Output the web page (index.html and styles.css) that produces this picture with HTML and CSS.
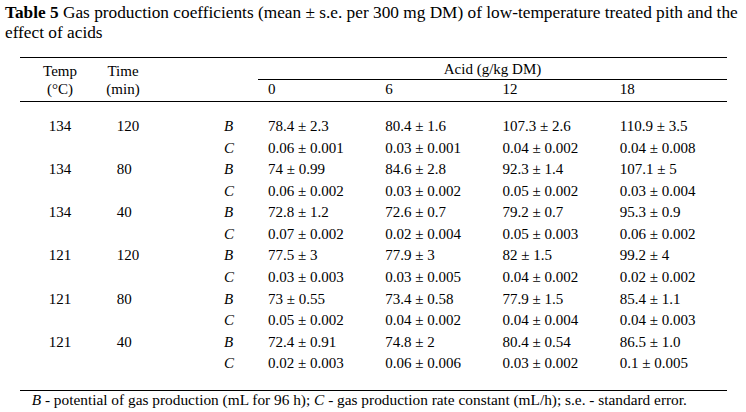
FILE: index.html
```html
<!DOCTYPE html>
<html lang="en">
<head>
<meta charset="utf-8">
<title>Table 5</title>
<link rel="stylesheet" href="styles.css">
</head>
<body>
<div class="page">
  <p class="caption"><b>Table 5</b> Gas production coefficients (mean ± s.e. per 300 mg DM) of low-temperature treated pith and the <span class="cap-end">effect of acids</span></p>
  <table class="data">
    <colgroup>
      <col class="c-temp"><col class="c-time"><col class="c-par">
      <col class="c-val"><col class="c-val"><col class="c-val"><col class="c-val">
    </colgroup>
    <thead>
      <tr class="h1">
        <th rowspan="2" class="stack">Temp<br>(°C)</th>
        <th rowspan="2" class="stack">Time<br>(min)</th>
        <th rowspan="2" class="stack"></th>
        <th colspan="4" class="acid">Acid (g/kg DM)</th>
      </tr>
      <tr class="h2">
        <th class="val">0</th><th class="val">6</th><th class="val">12</th><th class="val">18</th>
      </tr>
    </thead>
    <tbody>
      <tr class="first"><td class="temp">134</td><td class="time">120</td><td class="par">B</td><td>78.4 ± 2.3</td><td>80.4 ± 1.6</td><td>107.3 ± 2.6</td><td>110.9 ± 3.5</td></tr>
      <tr><td class="temp"></td><td class="time"></td><td class="par">C</td><td>0.06 ± 0.001</td><td>0.03 ± 0.001</td><td>0.04 ± 0.002</td><td>0.04 ± 0.008</td></tr>
      <tr><td class="temp">134</td><td class="time">80</td><td class="par">B</td><td>74 ± 0.99</td><td>84.6 ± 2.8</td><td>92.3 ± 1.4</td><td>107.1 ± 5</td></tr>
      <tr><td class="temp"></td><td class="time"></td><td class="par">C</td><td>0.06 ± 0.002</td><td>0.03 ± 0.002</td><td>0.05 ± 0.002</td><td>0.03 ± 0.004</td></tr>
      <tr><td class="temp">134</td><td class="time">40</td><td class="par">B</td><td>72.8 ± 1.2</td><td>72.6 ± 0.7</td><td>79.2 ± 0.7</td><td>95.3 ± 0.9</td></tr>
      <tr><td class="temp"></td><td class="time"></td><td class="par">C</td><td>0.07 ± 0.002</td><td>0.02 ± 0.004</td><td>0.05 ± 0.003</td><td>0.06 ± 0.002</td></tr>
      <tr><td class="temp">121</td><td class="time">120</td><td class="par">B</td><td>77.5 ± 3</td><td>77.9 ± 3</td><td>82 ± 1.5</td><td>99.2 ± 4</td></tr>
      <tr><td class="temp"></td><td class="time"></td><td class="par">C</td><td>0.03 ± 0.003</td><td>0.03 ± 0.005</td><td>0.04 ± 0.002</td><td>0.02 ± 0.002</td></tr>
      <tr><td class="temp">121</td><td class="time">80</td><td class="par">B</td><td>73 ± 0.55</td><td>73.4 ± 0.58</td><td>77.9 ± 1.5</td><td>85.4 ± 1.1</td></tr>
      <tr><td class="temp"></td><td class="time"></td><td class="par">C</td><td>0.05 ± 0.002</td><td>0.04 ± 0.002</td><td>0.04 ± 0.004</td><td>0.04 ± 0.003</td></tr>
      <tr><td class="temp">121</td><td class="time">40</td><td class="par">B</td><td>72.4 ± 0.91</td><td>74.8 ± 2</td><td>80.4 ± 0.54</td><td>86.5 ± 1.0</td></tr>
      <tr class="last"><td class="temp"></td><td class="time"></td><td class="par">C</td><td>0.02 ± 0.003</td><td>0.06 ± 0.006</td><td>0.03 ± 0.002</td><td>0.1 ± 0.005</td></tr>
    </tbody>
  </table>
  <p class="note"><i>B</i> - potential of gas production (mL for 96 h); <i>C</i> - gas production rate constant (mL/h); s.e. - standard error.</p>
</div>
</body>
</html>
```

FILE: styles.css
```css
html, body {
  margin: 0;
  padding: 0;
  background: #fff;
}

.page {
  width: 746px;
  font-family: "Liberation Serif", "Times New Roman", serif;
  font-size: 15px;
  color: #000;
}

.caption {
  margin: 0;
  padding: 2.5px 0 0 5px;
  width: 741px;
  font-size: 17.3px;
  line-height: 20px;
}

.cap-end {
  white-space: nowrap;
}

.data {
  margin: 14.8px 0 0 20px;
  width: 707px;
  table-layout: fixed;
  border-collapse: separate;
  border-spacing: 0;
}

.c-temp { width: 80px; }
.c-time { width: 46px; }
.c-par { width: 112px; }
.c-val { width: 117.25px; }

.data th {
  font-weight: normal;
  padding: 0;
}

.h1 th {
  border-top: 1px solid #000;
  padding-top: 3px;
  padding-bottom: 1px;
  line-height: 17px;
}

.h1 th.stack {
  border-bottom: 1px solid #000;
  vertical-align: bottom;
  text-align: center;
  line-height: 17.6px;
  padding-bottom: 3px;
}

.h1 th.acid {
  text-align: center;
  border-bottom: 1px solid #000;
}

.h2 th.val {
  text-align: left;
  padding: 1px 0 3px 10px;
  line-height: 17px;
  border-bottom: 1px solid #000;
}

.data td {
  padding: 0 0 0 10px;
  line-height: 21.55px;
  white-space: nowrap;
}

.data td.temp {
  padding-left: 0;
  text-align: center;
}

.data td.time {
  padding-left: 16.7px;
}

.data td.par {
  padding-left: 78px;
  font-style: italic;
}

.data tr.first td {
  padding-top: 13.9px;
}

.data tr.last td {
  padding-bottom: 15px;
  border-bottom: 1px solid #000;
}

.note {
  margin: 0 0 0 31.7px;
  font-size: 15.35px;
  line-height: 18px;
  white-space: nowrap;
}
```
